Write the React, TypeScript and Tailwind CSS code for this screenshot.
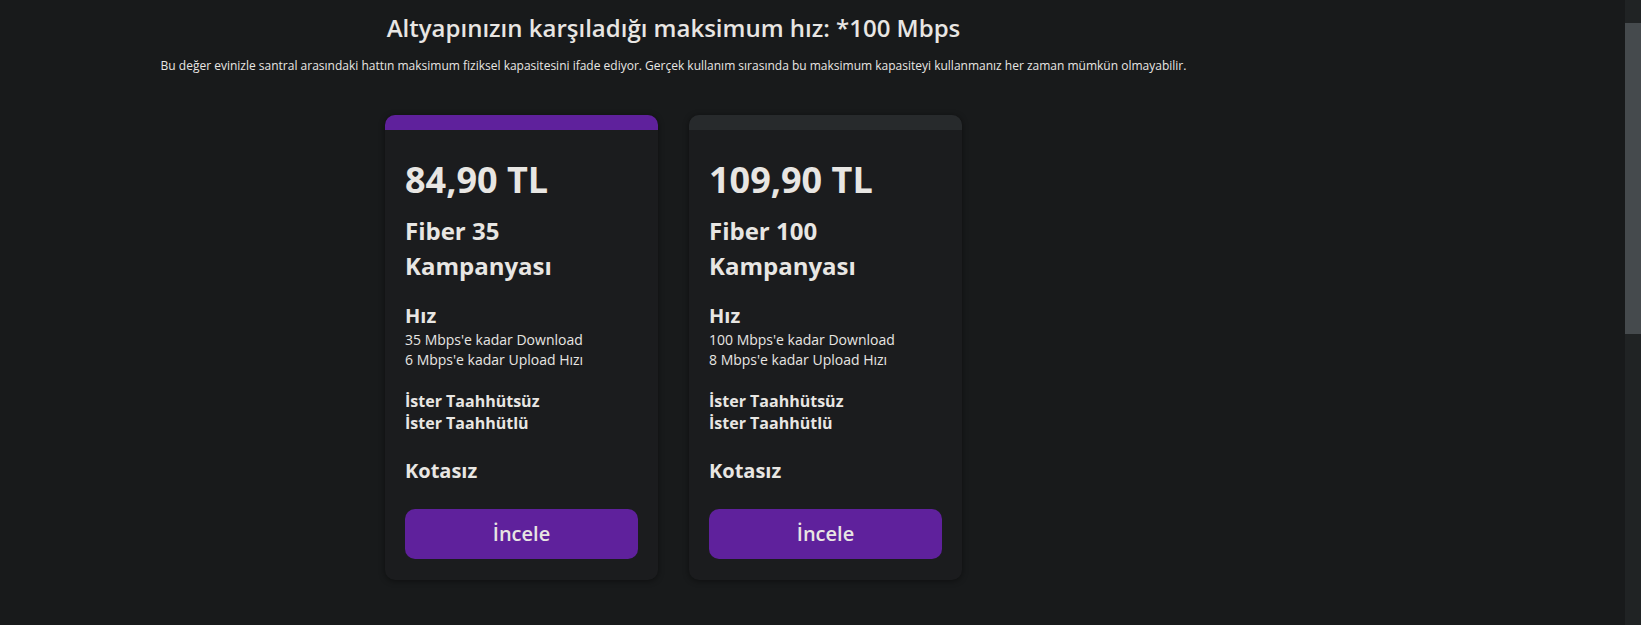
const plans = [
  {
    price: '84,90 TL',
    name: 'Fiber 35 Kampanyası',
    down: "35 Mbps'e kadar Download",
    up: "6 Mbps'e kadar Upload Hızı",
    highlight: true,
  },
  {
    price: '109,90 TL',
    name: 'Fiber 100 Kampanyası',
    down: "100 Mbps'e kadar Download",
    up: "8 Mbps'e kadar Upload Hızı",
    highlight: false,
  },
];

function PlanCard({ plan }: { plan: (typeof plans)[number] }) {
  return (
    <div className="w-[273px] rounded-[10px] overflow-hidden bg-[#1b1c1e] shadow-[0_1px_6px_rgba(0,0,0,0.45)] flex flex-col">
      <div className={plan.highlight ? 'h-[15px] bg-[#5f219c]' : 'h-[15px] bg-[#272a2c]'}></div>
      <div className="px-5 pt-[30px] pb-[21px] flex flex-col">
        <div className="text-[36px] leading-[40px] font-bold">{plan.price}</div>
        <div className="mt-[13px] w-[170px] text-[24px] leading-[35px] font-bold">{plan.name}</div>
        <div className="mt-[20px] text-[20px] leading-[26px] font-bold">Hız</div>
        <div className="mt-[1px] text-[14px] leading-[20px]">
          <div>{plan.down}</div>
          <div>{plan.up}</div>
        </div>
        <div className="mt-[20px] text-[16px] leading-[22px] font-bold">
          <div>İster Taahhütsüz</div>
          <div>İster Taahhütlü</div>
        </div>
        <div className="mt-[23px] text-[20px] leading-[28px] font-bold">Kotasız</div>
        <button className="mt-[24px] h-[50px] w-full rounded-[10px] bg-[#5f219c] text-[20px] font-semibold text-[#e8e6e3]">
          İncele
        </button>
      </div>
    </div>
  );
}

export default function App() {
  return (
    <div className="h-[625px] w-full overflow-hidden flex bg-[#181a1b] text-[#e8e6e3] font-['Open_Sans',sans-serif]">
      <div className="flex-1">
        <div className="w-[1347px] flex flex-col items-center">
          <h1 className="mt-[13px] text-[24px] leading-[30px] font-semibold">
            Altyapınızın karşıladığı maksimum hız: *100 Mbps
          </h1>
          <p className="mt-[15px] text-[12px] leading-[16px]">
            Bu değer evinizle santral arasındaki hattın maksimum fiziksel kapasitesini ifade ediyor. Gerçek kullanım sırasında bu maksimum kapasiteyi kullanmanız her zaman mümkün olmayabilir.
          </p>
          <div className="mt-[41px] flex gap-[31px]">
            {plans.map((p) => (
              <PlanCard key={p.price} plan={p} />
            ))}
          </div>
        </div>
      </div>
      <div className="w-[16px] h-full bg-[#202324] flex flex-col">
        <div className="mt-[23px] h-[311px] bg-[#454a4d]"></div>
      </div>
    </div>
  );
}
